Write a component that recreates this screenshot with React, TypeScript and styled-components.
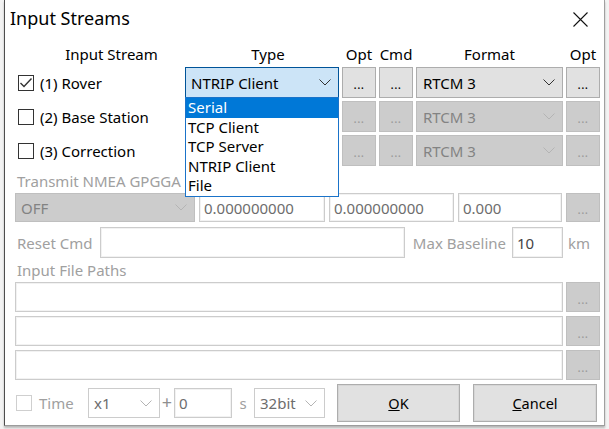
import React from "react";
import styled, { createGlobalStyle, css } from "styled-components";

const Global = createGlobalStyle`
  html, body {
    margin: 0;
    padding: 0;
    width: 609px;
    height: 429px;
    overflow: hidden;
    background: #f3f3f3;
  }
  body {
    font-family: "Noto Sans", "Open Sans", sans-serif;
    font-size: 15px;
    color: #000;
  }
  * { box-sizing: border-box; }
`;

const Window = styled.div`
  position: relative;
  margin-left: 4px;
  width: 601px;
  height: 426px;
  background: #fff;
  border-left: 1px solid #4d4d4d;
  border-right: 1px solid #a0a0a0;
  border-bottom: 1px solid #9c9c9c;
  box-shadow: 0 2px 2px rgba(0, 0, 0, 0.25);
  display: flex;
  flex-direction: column;
`;

const TitleBar = styled.div`
  height: 38px;
  display: flex;
  align-items: center;
  justify-content: space-between;
  padding: 0 16px 0 5px;
`;

const Title = styled.div`
  font-size: 18px;
  line-height: 1;
  padding-bottom: 2px;
`;

const CloseIcon = () => (
  <svg width="15" height="15" viewBox="0 0 15 15">
    <path d="M0.5 0.5 L14.5 14.5 M14.5 0.5 L0.5 14.5" stroke="#111" strokeWidth="1.1" fill="none" />
  </svg>
);

const Content = styled.div`
  display: flex;
  flex-direction: column;
  padding: 6px 3px 0 10px;
`;

const StreamGrid = styled.div`
  display: grid;
  grid-template-columns: 167px 154px 34px 34px 147px 34px;
  grid-template-rows: 20px 31px 31px 31px;
  column-gap: 3px;
  row-gap: 3px;
`;

const HeadCell = styled.div<{ $pl?: number }>`
  text-align: center;
  line-height: 20px;
  padding-left: ${(p) => p.$pl ?? 0}px;
  white-space: nowrap;
`;

const StreamLabel = styled.label`
  display: flex;
  align-items: center;
  gap: 6px;
  padding-left: 3px;
  white-space: nowrap;
`;

const Box = styled.span<{ $disabled?: boolean }>`
  width: 16px;
  height: 16px;
  flex: none;
  border: 1px solid ${(p) => (p.$disabled ? "#cfcfcf" : "#333")};
  background: #fff;
  display: flex;
  align-items: center;
  justify-content: center;
`;

const CheckBox = ({ checked, disabled }: { checked?: boolean; disabled?: boolean }) => (
  <Box $disabled={disabled}>
    {checked && (
      <svg width="14" height="14" viewBox="0 0 14 14">
        <path d="M1.5 7 L5 10.5 L12.5 2.5" stroke="#333" strokeWidth="1.4" fill="none" />
      </svg>
    )}
  </Box>
);

type ComboVariant = "open" | "normal" | "disabled" | "white";

const ComboBox = styled.div<{ $v: ComboVariant }>`
  display: flex;
  align-items: center;
  justify-content: space-between;
  padding: 0 7px 0 5px;
  height: 100%;
  white-space: nowrap;
  border: 1px solid #adadad;
  background: #e1e1e1;
  color: #000;
  ${(p) =>
    p.$v === "open" &&
    css`
      background: #cce4f7;
      border-color: #005499;
    `}
  ${(p) =>
    p.$v === "disabled" &&
    css`
      background: #cccccc;
      border-color: #bfbfbf;
      color: #838383;
    `}
  ${(p) =>
    p.$v === "white" &&
    css`
      background: #fff;
      border-color: #cccccc;
      color: #6d6d6d;
    `}
`;

const Chevron = ({ color }: { color: string }) => (
  <svg width="12" height="7" viewBox="0 0 12 7">
    <path d="M0.5 0.5 L6 6 L11.5 0.5" stroke={color} strokeWidth="1" fill="none" />
  </svg>
);

const Combo = ({ v, text, pl }: { v: ComboVariant; text: string; pl?: number }) => (
  <ComboBox $v={v} style={pl ? { paddingLeft: pl } : undefined}>
    <span>{text}</span>
    <Chevron color={v === "open" || v === "normal" ? "#333" : "#b4b4b4"} />
  </ComboBox>
);

const DotButton = styled.div<{ $disabled?: boolean }>`
  display: flex;
  align-items: center;
  justify-content: center;
  height: 100%;
  font-size: 12px;
  letter-spacing: 0.5px;
  padding-top: 4px;
  border: 1px solid ${(p) => (p.$disabled ? "#bfbfbf" : "#adadad")};
  background: ${(p) => (p.$disabled ? "#cccccc" : "#e1e1e1")};
  color: ${(p) => (p.$disabled ? "#9a9a9a" : "#000")};
`;

const Field = styled.div<{ $tone?: "mid" | "dark" }>`
  display: flex;
  align-items: center;
  height: 100%;
  padding-left: 4px;
  background: #fff;
  border: 1px solid #cccccc;
  box-shadow: inset 0 0 0 1px #f2f2f2;
  color: ${(p) => (p.$tone === "dark" ? "#444" : "#6d6d6d")};
  white-space: nowrap;
`;

const DimLabel = styled.div<{ $align?: "left" | "right" | "center" }>`
  color: #a0a0a0;
  white-space: nowrap;
  text-align: ${(p) => p.$align ?? "left"};
  line-height: 18px;
`;

const PlusSign = styled(DimLabel)`
  font-size: 18px;
  color: #8f8f8f;
  padding-bottom: 2px;
`;

const SectionLabel = styled(DimLabel)`
  padding-left: 2px;
  height: 18px;
`;

const PositionRow = styled.div`
  display: grid;
  grid-template-columns: 180px 126px 125px 104px 34px;
  column-gap: 4px;
  height: 29px;
  margin-top: 3px;
`;

const ResetRow = styled.div`
  display: grid;
  grid-template-columns: 85px 305px 107px 51px 37px;
  align-items: center;
  height: 31px;
  margin-top: 5px;
  & > * { align-self: stretch; display: flex; align-items: center; }
`;

const FileRows = styled.div`
  display: flex;
  flex-direction: column;
  gap: 4px;
  margin-top: 3px;
`;

const FileRow = styled.div`
  display: grid;
  grid-template-columns: 548px 34px;
  column-gap: 3px;
  height: 30px;
`;

const BottomRow = styled.div`
  display: grid;
  grid-template-columns: 73px 72px 14px 58px 22px 71px 12px 123px 13px 124px;
  align-items: center;
  height: 38px;
  margin-top: 4px;
`;

const TimeCell = styled.div`
  display: flex;
  align-items: center;
  gap: 7px;
  padding-left: 1px;
`;

const SmallCell = styled.div`
  height: 30px;
`;

const PushButton = styled.div`
  height: 38px;
  display: flex;
  align-items: center;
  justify-content: center;
  background: #e1e1e1;
  border: 1px solid #adadad;
  box-shadow: inset 0 0 0 1px #d6d6d6;
  font-size: 14.5px;
`;

const DropList = styled.div`
  position: absolute;
  left: 180px;
  top: 97px;
  width: 154px;
  height: 100px;
  background: #fff;
  border: 1px solid #1a73c9;
  display: flex;
  flex-direction: column;
  z-index: 2;
`;

const DropItem = styled.div<{ $active?: boolean }>`
  height: 19.5px;
  line-height: 19.5px;
  padding-left: 2px;
  white-space: nowrap;
  background: ${(p) => (p.$active ? "#0078d7" : "transparent")};
  color: ${(p) => (p.$active ? "#fff" : "#000")};
`;

const streams = [
  { label: "(1) Rover", checked: true, enabled: true },
  { label: "(2) Base Station", checked: false, enabled: false },
  { label: "(3) Correction", checked: false, enabled: false },
];

export default function App() {
  return (
    <>
      <Global />
      <Window>
        <TitleBar>
          <Title>Input Streams</Title>
          <CloseIcon />
        </TitleBar>
        <Content>
          <StreamGrid>
            <HeadCell $pl={26}>Input Stream</HeadCell>
            <HeadCell $pl={12}>Type</HeadCell>
            <HeadCell>Opt</HeadCell>
            <HeadCell>Cmd</HeadCell>
            <HeadCell>Format</HeadCell>
            <HeadCell>Opt</HeadCell>
            {streams.map((s, i) => (
              <React.Fragment key={s.label}>
                <StreamLabel>
                  <CheckBox checked={s.checked} />
                  <span>{s.label}</span>
                </StreamLabel>
                {i === 0 ? <Combo v="open" text="NTRIP Client" /> : <div />}
                <DotButton $disabled={!s.enabled}>...</DotButton>
                <DotButton $disabled={!s.enabled}>...</DotButton>
                <Combo v={s.enabled ? "normal" : "disabled"} text="RTCM 3" pl={6} />
                <DotButton $disabled={!s.enabled}>...</DotButton>
              </React.Fragment>
            ))}
          </StreamGrid>

          <SectionLabel style={{ marginTop: 6 }}>Transmit NMEA GPGGA</SectionLabel>
          <PositionRow>
            <Combo v="disabled" text="OFF" />
            <Field>0.000000000</Field>
            <Field>0.000000000</Field>
            <Field>0.000</Field>
            <DotButton $disabled>...</DotButton>
          </PositionRow>

          <ResetRow>
            <DimLabel style={{ paddingLeft: 2 }}>Reset Cmd</DimLabel>
            <Field />
            <DimLabel $align="right" style={{ justifyContent: "flex-end", paddingRight: 6 }}>
              Max Baseline
            </DimLabel>
            <Field $tone="dark">10</Field>
            <DimLabel style={{ paddingLeft: 5 }}>km</DimLabel>
          </ResetRow>

          <SectionLabel style={{ marginTop: 3 }}>Input File Paths</SectionLabel>
          <FileRows>
            {[0, 1, 2].map((i) => (
              <FileRow key={i}>
                <Field />
                <DotButton $disabled>...</DotButton>
              </FileRow>
            ))}
          </FileRows>

          <BottomRow>
            <TimeCell>
              <CheckBox disabled />
              <DimLabel>Time</DimLabel>
            </TimeCell>
            <SmallCell>
              <Combo v="white" text="x1" />
            </SmallCell>
            <PlusSign $align="center">+</PlusSign>
            <SmallCell>
              <Field>0</Field>
            </SmallCell>
            <DimLabel $align="center">s</DimLabel>
            <SmallCell>
              <Combo v="white" text="32bit" />
            </SmallCell>
            <div />
            <PushButton>
              <span>
                <u>O</u>K
              </span>
            </PushButton>
            <div />
            <PushButton>
              <span>
                <u>C</u>ancel
              </span>
            </PushButton>
          </BottomRow>
        </Content>

        <DropList>
          <DropItem $active>Serial</DropItem>
          <DropItem>TCP Client</DropItem>
          <DropItem>TCP Server</DropItem>
          <DropItem>NTRIP Client</DropItem>
          <DropItem>File</DropItem>
        </DropList>
      </Window>
    </>
  );
}
